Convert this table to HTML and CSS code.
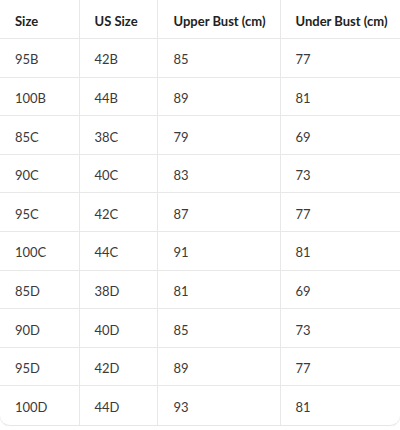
FILE: index.html
```html
<!DOCTYPE html>
<html>
<head>
<meta charset="utf-8">
<link rel="stylesheet" href="styles.css">
</head>
<body>
<div class="wrap">
<table class="sizes">
<colgroup>
<col class="c1"><col class="c2"><col class="c3"><col class="c4">
</colgroup>
<thead>
<tr><th>Size</th><th>US Size</th><th>Upper Bust (cm)</th><th>Under Bust (cm)</th></tr>
</thead>
<tbody>
<tr><td>95B</td><td>42B</td><td>85</td><td>77</td></tr>
<tr><td>100B</td><td>44B</td><td>89</td><td>81</td></tr>
<tr><td>85C</td><td>38C</td><td>79</td><td>69</td></tr>
<tr><td>90C</td><td>40C</td><td>83</td><td>73</td></tr>
<tr><td>95C</td><td>42C</td><td>87</td><td>77</td></tr>
<tr><td>100C</td><td>44C</td><td>91</td><td>81</td></tr>
<tr><td>85D</td><td>38D</td><td>81</td><td>69</td></tr>
<tr><td>90D</td><td>40D</td><td>85</td><td>73</td></tr>
<tr><td>95D</td><td>42D</td><td>89</td><td>77</td></tr>
<tr><td>100D</td><td>44D</td><td>93</td><td>81</td></tr>
</tbody>
</table>
</div>
</body>
</html>
```
FILE: styles.css
```css
html, body {
  margin: 0;
  padding: 0;
  background: #ffffff;
}
body {
  font-family: Lato, "Open Sans", sans-serif;
  color: #333;
}
.wrap {
  width: 400px;
  height: 426px;
  box-sizing: border-box;
  border-bottom: 1px solid #e6e6e6;
  border-radius: 0 0 10px 10px;
  box-shadow: 0 1px 0 #f2f2f2;
  overflow: hidden;
}
.sizes {
  width: 400px;
  border-collapse: collapse;
  table-layout: fixed;
}
.c1 { width: 79px; }
.c2 { width: 78px; }
.c3 { width: 123px; }
.c4 { width: 120px; }
.sizes th, .sizes td {
  height: 38.6px;
  padding: 3px 0 0 15px;
  box-sizing: border-box;
  text-align: left;
  font-size: 13px;
  border-bottom: 1px solid #e8e8e8;
  border-right: 1px solid #e8e8e8;
}
.sizes th {
  font-weight: 700;
  color: #222;
}
.sizes td {
  color: #3a3a3a;
}
.sizes th:nth-child(3), .sizes td:nth-child(3) { padding-left: 16px; }
.sizes th:last-child, .sizes td:last-child { border-right: none; }
.sizes tbody tr:last-child td { border-bottom: none; }
```
